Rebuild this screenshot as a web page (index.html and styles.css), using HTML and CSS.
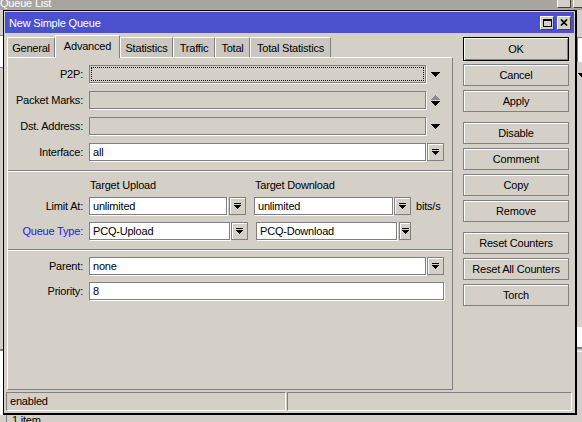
FILE: index.html
```html
<!DOCTYPE html>
<html>
<head>
<meta charset="utf-8">
<title>New Simple Queue</title>
<link rel="stylesheet" href="styles.css">
</head>
<body>
<div class="desktop">
  <div class="back">
    <div class="back-title">
      <span class="back-title-text">Queue List</span>
      <div class="back-tbtns"><span class="back-tbtn"></span><span class="back-tbtn"></span></div>
    </div>
    <div class="back-body">
      <div class="back-left">
        <div class="l1"></div>
        <div class="l2"></div>
        <div class="l3"></div>
        <div class="l4"></div>
      </div>
      <div class="back-mid"></div>
      <div class="back-right">
        <div class="r1"></div>
        <div class="r2"></div>
        <div class="r3"></div>
        <div class="r4"><svg width="9" height="5" viewBox="0 0 9 5" shape-rendering="crispEdges"><path d="M0 0h9v1h-1v1h-1v1h-1v1h-1v1h-1v-1h-1v-1h-1v-1h-1v-1h-1z" fill="#000"/></svg></div>
        <div class="r5"></div>
        <div class="r6"></div>
        <div class="r7"></div>
        <div class="r8"></div>
      </div>
    </div>
    <div class="back-foot"><span class="foot-cell">1 item</span></div>
  </div>

  <div class="dialog">
    <div class="titlebar">
      <span class="title-text">New Simple Queue</span>
      <div class="title-btns">
        <span class="tbtn"><svg width="9" height="8" viewBox="0 0 9 8" shape-rendering="crispEdges"><path d="M0 0H9V8H0Z M1 2V7H8V2Z" fill="#000" fill-rule="evenodd"/></svg></span>
        <span class="tbtn"><svg width="8" height="7" viewBox="0 0 8 7"><path d="M1 0.5L7 6.5M7 0.5L1 6.5" stroke="#000" stroke-width="1.7"/></svg></span>
      </div>
    </div>
    <div class="dlg-body">
      <div class="left-col">
        <div class="tabs">
          <div class="tab t-general">General</div>
          <div class="tab active t-advanced">Advanced</div>
          <div class="tab t-stats">Statistics</div>
          <div class="tab t-traffic">Traffic</div>
          <div class="tab t-total">Total</div>
          <div class="tab t-tstats">Total Statistics</div>
        </div>
        <div class="panel">
          <div class="fgroup g8">
            <div class="row">
              <span class="lbl">P2P:</span>
              <div class="field wide disabled focus"><span class="focus-ring"></span></div>
              <span class="slot"><svg width="9" height="5" viewBox="0 0 9 5" shape-rendering="crispEdges"><path d="M0 0h9v1h-1v1h-1v1h-1v1h-1v1h-1v-1h-1v-1h-1v-1h-1v-1h-1z" fill="#000"/></svg></span>
            </div>
            <div class="row">
              <span class="lbl">Packet Marks:</span>
              <div class="field wide disabled"></div>
              <span class="slot"><svg width="9" height="11" viewBox="0 0 9 11" shape-rendering="crispEdges"><path d="M4 0h1v1h1v1h1v1h1v1h1v1h-9v-1h1v-1h1v-1h1v-1h1z" fill="#8a8a8a"/><path d="M0 6h9v1h-1v1h-1v1h-1v1h-1v1h-1v-1h-1v-1h-1v-1h-1v-1h-1z" fill="#000"/></svg></span>
            </div>
            <div class="row">
              <span class="lbl">Dst. Address:</span>
              <div class="field wide disabled"></div>
              <span class="slot"><svg width="9" height="5" viewBox="0 0 9 5" shape-rendering="crispEdges"><path d="M0 0h9v1h-1v1h-1v1h-1v1h-1v1h-1v-1h-1v-1h-1v-1h-1v-1h-1z" fill="#000"/></svg></span>
            </div>
            <div class="row">
              <span class="lbl">Interface:</span>
              <div class="field wide">all</div>
              <span class="cbtn m1"><svg width="7" height="6" viewBox="0 0 7 6" shape-rendering="crispEdges"><path d="M0 0h7v1h-7z M0 2h7v1h-1v1h-1v1h-1v1h-1v-1h-1v-1h-1v-1h-1z" fill="#000"/></svg></span>
            </div>
          </div>
          <div class="sep s1"></div>
          <div class="colhead"><span class="ch1">Target Upload</span><span class="ch2">Target Download</span></div>
          <div class="fgroup g7 gl">
            <div class="row">
              <span class="lbl">Limit At:</span>
              <div class="field w-l1">unlimited</div>
              <span class="cbtn m2"><svg width="7" height="6" viewBox="0 0 7 6" shape-rendering="crispEdges"><path d="M0 0h7v1h-7z M0 2h7v1h-1v1h-1v1h-1v1h-1v-1h-1v-1h-1v-1h-1z" fill="#000"/></svg></span>
              <div class="field w-l2 col2a">unlimited</div>
              <span class="cbtn m1"><svg width="7" height="6" viewBox="0 0 7 6" shape-rendering="crispEdges"><path d="M0 0h7v1h-7z M0 2h7v1h-1v1h-1v1h-1v1h-1v-1h-1v-1h-1v-1h-1z" fill="#000"/></svg></span>
              <span class="unit">bits/s</span>
            </div>
            <div class="row">
              <span class="lbl link">Queue Type:</span>
              <div class="field w-q">PCQ-Upload</div>
              <span class="cbtn m1"><svg width="7" height="6" viewBox="0 0 7 6" shape-rendering="crispEdges"><path d="M0 0h7v1h-7z M0 2h7v1h-1v1h-1v1h-1v1h-1v-1h-1v-1h-1v-1h-1z" fill="#000"/></svg></span>
              <div class="field w-q col2b">PCQ-Download</div>
              <span class="cbtn narrow m2"><svg width="7" height="6" viewBox="0 0 7 6" shape-rendering="crispEdges"><path d="M0 0h7v1h-7z M0 2h7v1h-1v1h-1v1h-1v1h-1v-1h-1v-1h-1v-1h-1z" fill="#000"/></svg></span>
            </div>
          </div>
          <div class="sep s2"></div>
          <div class="fgroup g7 gp">
            <div class="row">
              <span class="lbl">Parent:</span>
              <div class="field wide">none</div>
              <span class="cbtn m1"><svg width="7" height="6" viewBox="0 0 7 6" shape-rendering="crispEdges"><path d="M0 0h7v1h-7z M0 2h7v1h-1v1h-1v1h-1v1h-1v-1h-1v-1h-1v-1h-1z" fill="#000"/></svg></span>
            </div>
            <div class="row">
              <span class="lbl">Priority:</span>
              <div class="field full">8</div>
            </div>
          </div>
        </div>
      </div>
      <div class="btn-col">
        <div class="btn default">OK</div>
        <div class="btn after-ok">Cancel</div>
        <div class="btn">Apply</div>
        <div class="btn grp">Disable</div>
        <div class="btn">Comment</div>
        <div class="btn">Copy</div>
        <div class="btn">Remove</div>
        <div class="btn grp">Reset Counters</div>
        <div class="btn">Reset All Counters</div>
        <div class="btn">Torch</div>
      </div>
    </div>
    <div class="statusbar">
      <div class="sb sb1">enabled</div>
      <div class="sb sb2"></div>
    </div>
  </div>
</div>
</body>
</html>
```

FILE: styles.css
```css
* { box-sizing: border-box; }
html, body { margin: 0; padding: 0; }
body {
  font-family: "Liberation Sans", Arial, sans-serif;
  font-size: 11px;
  letter-spacing: -0.2px;
  color: #000;
  background: #d4d0c8;
}
.desktop {
  position: relative;
  width: 582px;
  height: 422px;
  overflow: hidden;
  background: #d4d0c8;
}

/* background window */
.back { display: flex; flex-direction: column; height: 422px; }
.back-title {
  flex: none;
  height: 10px;
  background: #a8a59f;
  display: flex;
  overflow: hidden;
}
.back-title-text {
  display: block;
  color: #fff;
  line-height: 11px;
  margin-top: -2px;
  white-space: nowrap;
}
.back-tbtns { margin-left: auto; margin-right: -5px; margin-top: -6px; display: flex; gap: 2px; }
.back-tbtn {
  width: 14px; height: 14px;
  background: #d4d0c8;
  border: 1px solid;
  border-color: #fff #404040 #404040 #fff;
}
.back-body { flex: 1; display: flex; }
.back-left { width: 3px; display: flex; flex-direction: column; }
.back-mid { flex: 1; }
.back-right { width: 5px; display: flex; flex-direction: column; }
.l1 { height: 25px; }
.l2 { height: 33px; background: #fff; border-top: 1px solid #808080; border-bottom: 1px solid #808080; }
.l3 { flex: 1; }
.l4 { height: 66px; background: #fff; border-top: 2px solid #808080; }
.r1 { height: 27px; }
.r2 { height: 25px; background: #fff; border-top: 1px solid #808080; border-left: 1px solid #808080; }
.r3 { height: 10px; }
.r4 { height: 8px; overflow: hidden; padding-left: 1px; padding-top: 1px; }
.r4 svg { display: block; }
.r5 { flex: 1; }
.r6 { height: 20px; background: #fff; }
.r7 { height: 5px; border-top: 2px solid #808080; border-bottom: 1px solid #fff; }
.r8 { height: 63px; }
.back-foot { flex: none; height: 7px; overflow: hidden; display: flex; }
.foot-cell {
  display: block;
  margin-left: 6px;
  padding-left: 5px;
  border-left: 1px solid #808080;
  line-height: 13px;
  margin-top: -1px;
}

/* dialog window */
.dialog {
  position: absolute;
  left: 3px;
  top: 10px;
  width: 574px;
  height: 405px;
  background: #d4d0c8;
  border: 1px solid #000;
  border-right-width: 2px;
  border-bottom-width: 2px;
  padding: 1px 0 2px 0;
  display: flex;
  flex-direction: column;
}
.titlebar {
  flex: none;
  height: 21px;
  margin: 0 1px;
  background: #4b50cc;
  display: flex;
  align-items: center;
  padding: 0 3px 0 4px;
}
.title-text { color: #fff; white-space: nowrap; }
.title-btns { margin-left: auto; display: flex; gap: 3px; }
.tbtn {
  width: 14px; height: 14px;
  background: #d4d0c8;
  border: 1px solid;
  border-color: #fff #404040 #404040 #fff;
  display: flex;
  align-items: center;
  justify-content: center;
}
.tbtn svg { display: block; }

.dlg-body {
  flex: none;
  display: flex;
  padding: 2px 6px 0 3px;
}
.left-col { width: 446px; flex: none; }
.tabs { display: flex; align-items: flex-end; height: 22px; }
.tab {
  flex: none;
  height: 20px;
  background: #cbc7c0;
  border-top: 1px solid #fff;
  border-left: 1px solid #fff;
  border-right: 1px solid #808080;
  display: flex;
  align-items: center;
  justify-content: center;
  white-space: nowrap;
}
.tab.active {
  position: relative;
  z-index: 1;
  height: 23px;
  margin-bottom: -1px;
  background: #d4d0c8;
  padding-bottom: 2px;
}
.t-general { width: 48px; }
.t-advanced { width: 65px; }
.t-stats { width: 53px; }
.t-traffic { width: 42px; }
.t-total { width: 35px; }
.t-tstats { width: 81px; }

.panel {
  height: 333px;
  border: 1px solid;
  border-color: #fff #808080 #808080 #fff;
  padding-top: 7px;
  display: flex;
  flex-direction: column;
}
.fgroup { display: flex; flex-direction: column; }
.g8 { gap: 8px; }
.g7 { gap: 7px; }
.gl { margin-top: 5px; }
.gp { margin-top: 6px; }
.row { display: flex; align-items: center; height: 18px; }
.lbl {
  flex: none;
  width: 75px;
  margin-right: 6px;
  text-align: right;
  white-space: nowrap;
}
.lbl.link { color: #1b1bd6; }
.field {
  flex: none;
  height: 18px;
  background: #fff;
  border: 1px solid #808080;
  box-shadow: 1px 1px 0 #fff;
  padding-left: 3px;
  line-height: 16px;
  white-space: nowrap;
  overflow: hidden;
}
.field.disabled { background: #d4d0c8; }
.field.focus { padding: 1px; }
.focus-ring { display: block; height: 100%; border: 1px dotted #000; }
.wide { width: 337px; }
.full { width: 355px; }
.w-l1 { width: 138px; }
.w-l2 { width: 139px; }
.w-q { width: 141px; }
.col2a, .col2b { margin-left: 8px; }
.slot {
  flex: none;
  width: 17px;
  height: 18px;
  margin-left: 1px;
  display: flex;
  align-items: center;
  justify-content: center;
}
.slot svg, .cbtn svg { display: block; }
.cbtn {
  flex: none;
  width: 17px;
  height: 18px;
  background: #d4d0c8;
  border: 1px solid #808080;
  box-shadow: inset 1px 1px 0 #fff;
  display: flex;
  align-items: center;
  justify-content: center;
}
.cbtn.narrow { width: 12px; }
.m1 { margin-left: 1px; }
.m2 { margin-left: 2px; }
.unit { margin-left: 5px; white-space: nowrap; }

.sep { flex: none; height: 2px; border-top: 1px solid #808080; border-bottom: 1px solid #fff; margin-top: 9px; }
.colhead { display: flex; height: 14px; line-height: 14px; margin-top: 6px; white-space: nowrap; }
.ch1 { margin-left: 82px; width: 165px; }

.btn-col {
  width: 106px;
  flex: none;
  margin-left: 10px;
  margin-top: 2px;
  display: flex;
  flex-direction: column;
}
.btn {
  flex: none;
  height: 22px;
  background: #d4d0c8;
  border: 1px solid #808080;
  box-shadow: inset 1px 1px 0 #fff;
  display: flex;
  align-items: center;
  justify-content: center;
  white-space: nowrap;
  margin-top: 4px;
}
.btn.default {
  height: 24px;
  margin-top: 0;
  border-color: #000;
  box-shadow: inset 1px 1px 0 #fff, inset -1px -1px 0 #808080;
}
.btn.after-ok { margin-top: 3px; }
.btn.grp { margin-top: 10px; }

.statusbar {
  flex: none;
  display: flex;
  height: 19px;
  margin: 2px 3px 0 2px;
}
.sb {
  border: 1px solid;
  border-color: #808080 #fff #fff #808080;
  line-height: 17px;
  padding-left: 3px;
  white-space: nowrap;
}
.sb1 { width: 280px; flex: none; }
.sb2 { flex: 1; margin-left: 1px; }
```
